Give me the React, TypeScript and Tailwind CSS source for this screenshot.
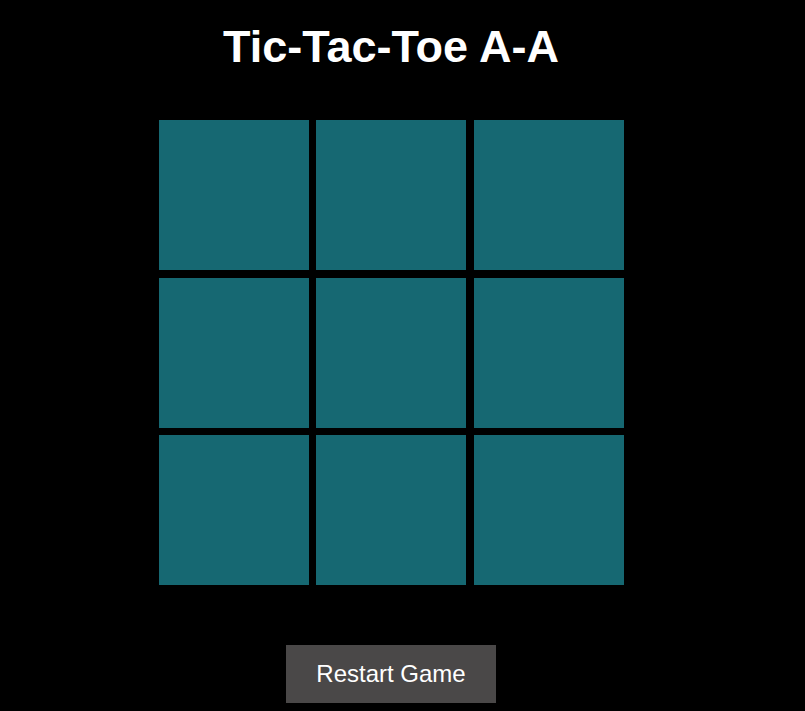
export default function App() {
  const cells = Array.from({ length: 9 }, (_, i) => i);
  return (
    <div className="min-h-[711px] w-full bg-black font-['Liberation_Sans',Arial,sans-serif]">
      <div className="w-[782px] flex flex-col items-center">
        <h1 className="mt-[24px] text-[45px] leading-[45px] font-bold text-white">
          Tic-Tac-Toe A-A
        </h1>
        <div className="mt-[51px] grid grid-cols-[repeat(3,150px)] gap-[7.5px]">
          {cells.map((c) => (
            <div key={c} className="w-[150px] h-[150px] bg-[#166872]" />
          ))}
        </div>
        <button className="mt-[60px] w-[210px] h-[58px] bg-[#4a4848] text-white text-[24px] flex items-center justify-center">
          Restart Game
        </button>
      </div>
    </div>
  );
}
